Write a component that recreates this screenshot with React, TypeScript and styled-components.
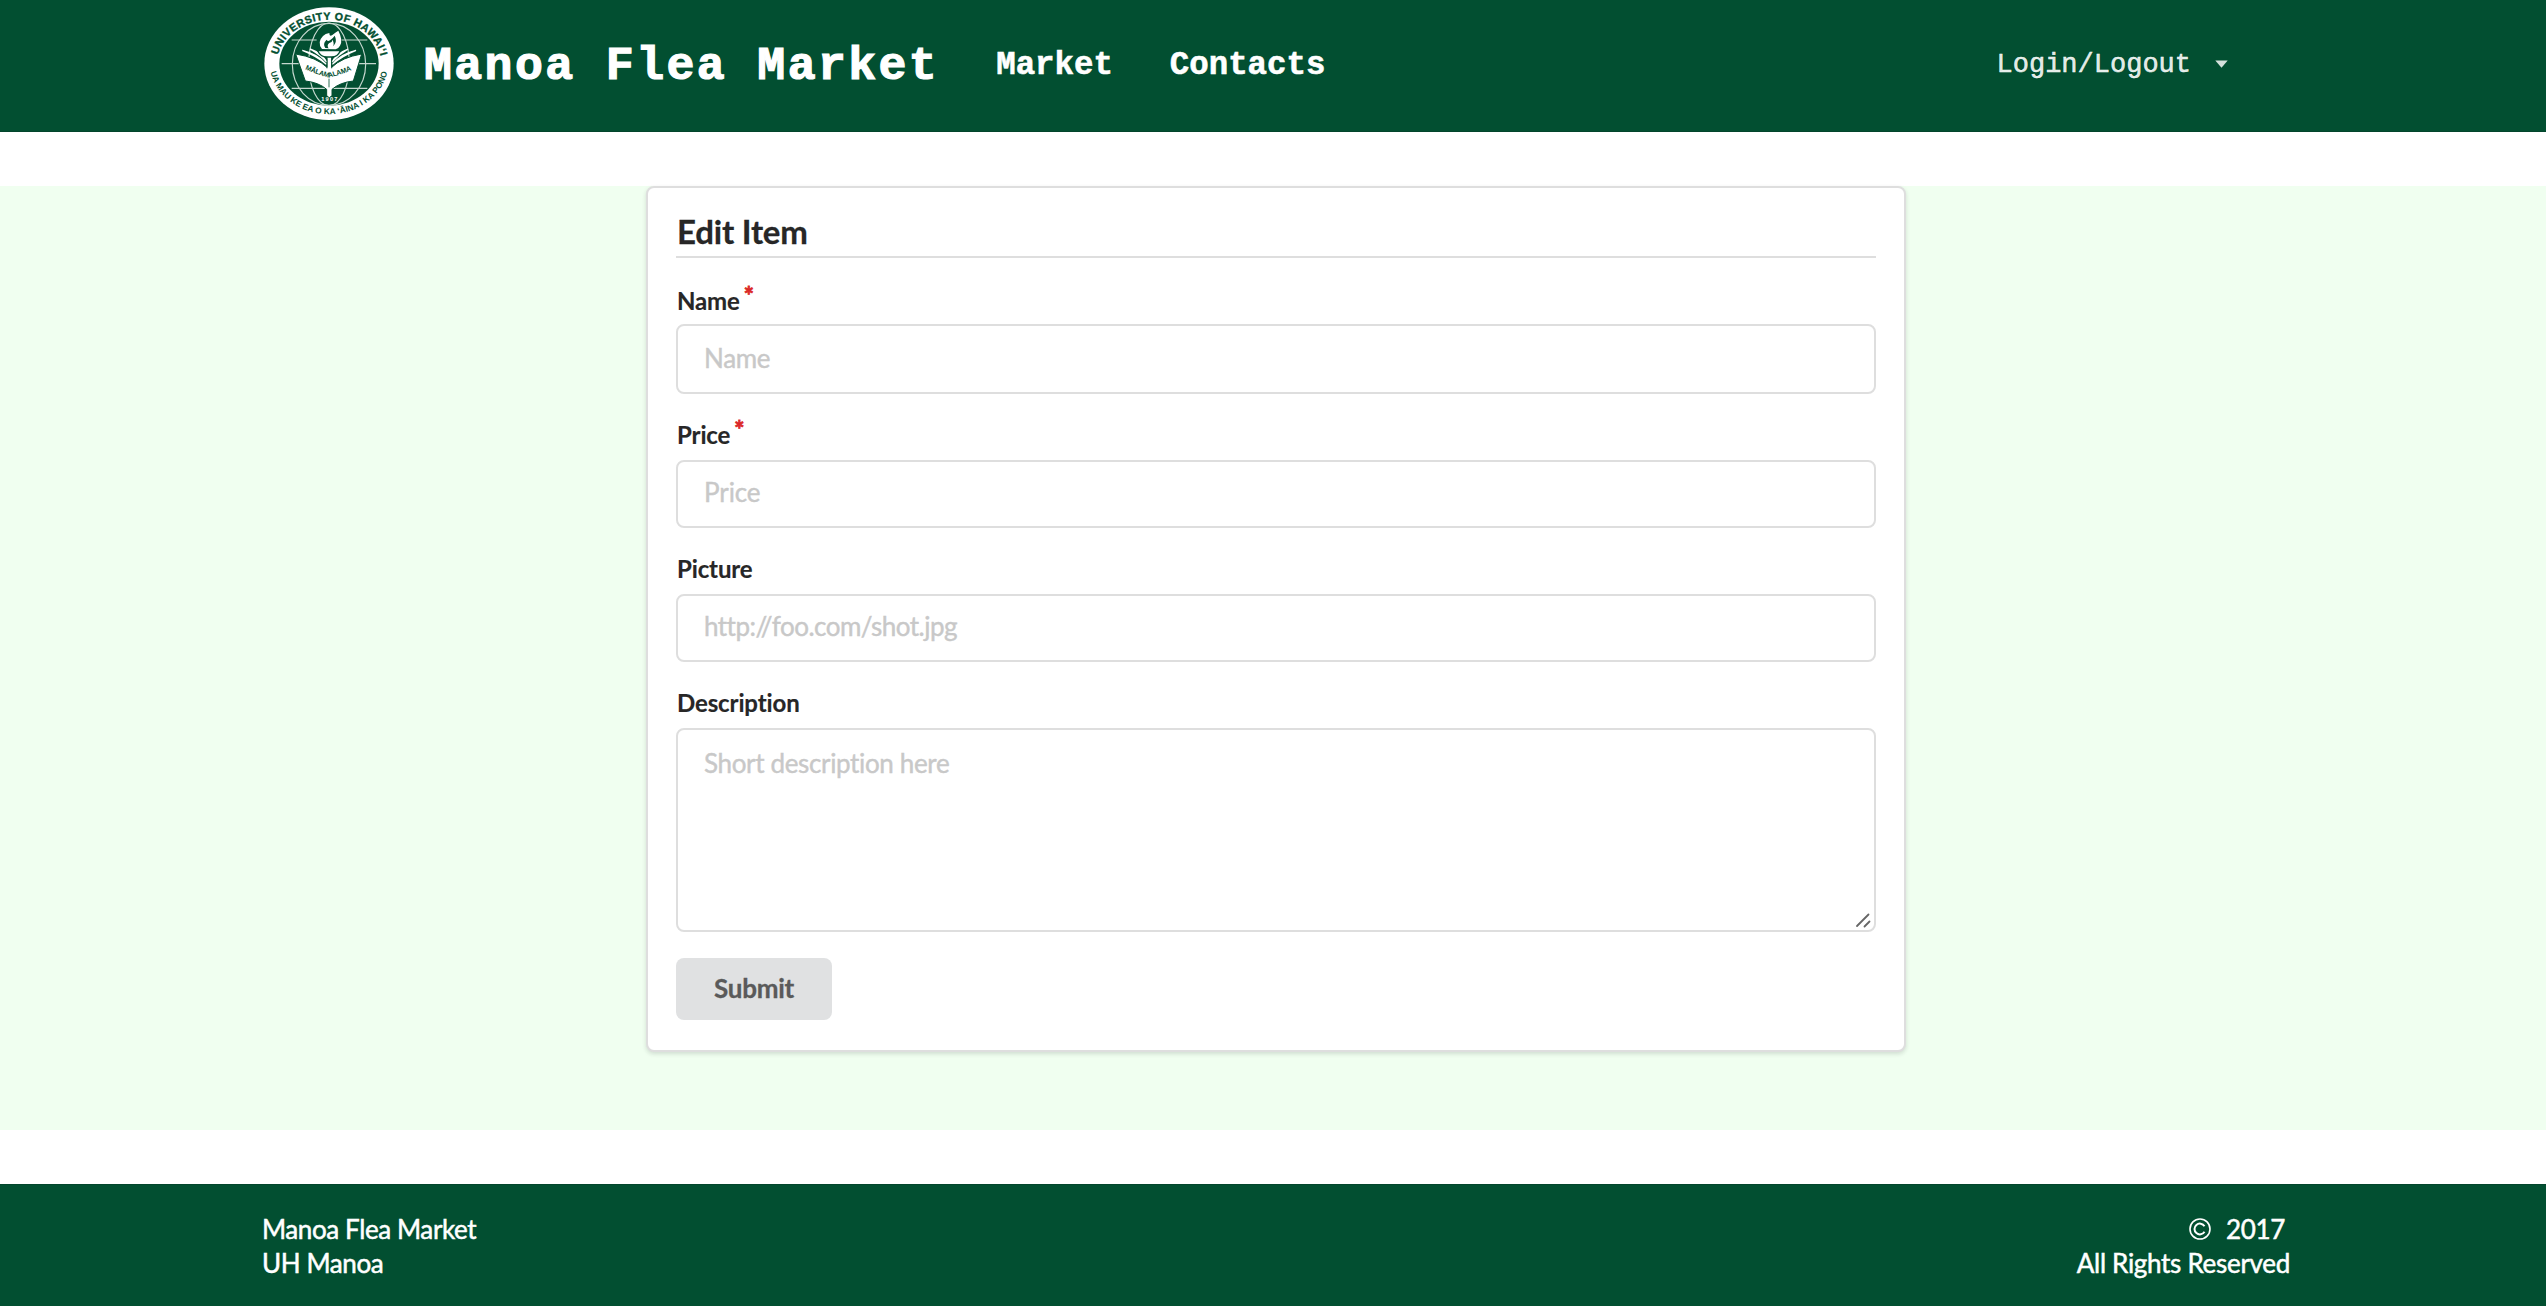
import React from "react";
import styled, { createGlobalStyle } from "styled-components";

const GlobalStyle = createGlobalStyle`
  * { box-sizing: border-box; }
  body { margin: 0; background: #fff; font-family: Lato, "Liberation Sans", sans-serif; font-size: 26px; letter-spacing: -.4px; color: rgba(0,0,0,.87); }
`;

const GREEN = "#024f31";
const LINE = "#dedede";
const MONO = '"Liberation Mono", "Courier New", monospace';

const Page = styled.div`
  height: 1306px;
  display: flex;
  flex-direction: column;
  overflow: hidden;
`;
const NavBar = styled.header`
  height: 132px;
  flex: none;
  background: ${GREEN};
  border-bottom: 1px solid #03452c;
  padding: 0 318px 0 264px;
  display: flex;
  align-items: center;
  color: #fff;
  font-family: ${MONO};
  letter-spacing: 0;
`;
const Logo = styled.svg`
  width: 130px;
  height: 114px;
  flex: none;
  margin-bottom: 3px;
`;
const Brand = styled.h1`
  margin: 3px 0 0 30px;
  font-size: 46.500px;
  line-height: 54px;
  letter-spacing: 2.400px;
  font-weight: 700;
  white-space: nowrap;
  -webkit-text-stroke: 1.200px #fff;
`;
const NavLink = styled.a`
  margin-left: 57px;
  font-size: 32.400px;
  line-height: 40px;
  font-weight: 700;
  -webkit-text-stroke: .6px #fff;
`;
const LoginMenu = styled.div`
  margin: 0 0 2px auto;
  display: flex;
  align-items: center;
  gap: 24px;
  font-size: 27px;
  line-height: 32px;
  color: rgba(255,255,255,.9);
  -webkit-text-stroke: .5px rgba(255,255,255,.9);
`;
const Caret = styled.svg`
  width: 13px;
  height: 8px;
  display: block;
  margin-bottom: 2px;
`;
const Main = styled.main`
  margin: 54px 0;
  height: 944px;
  flex: none;
  background: #f0fff0;
  display: flex;
  justify-content: center;
  align-items: flex-start;
  padding-left: 6px;
`;
const Card = styled.form`
  width: 1260px;
  height: 866px;
  background: #fff;
  border: 2px solid ${LINE};
  border-radius: 8px;
  box-shadow: 0 2px 4px rgba(34,36,38,.15);
  padding: 28px;
`;
const CardTitle = styled.h2`
  margin: 0;
  height: 42px;
  border-bottom: 2px solid ${LINE};
  padding-left: 1px;
  font-size: 33px;
  line-height: 30px;
  letter-spacing: -.2px;
  font-weight: 700;
  -webkit-text-stroke: .3px #222;
`;
const Field = styled.div`
  margin-top: 31px;
  display: flex;
  flex-direction: column;
`;
const Label = styled.label<{ $lh?: number }>`
  height: 35px;
  padding-left: 1px;
  font-size: 24px;
  line-height: ${(p) => p.$lh ?? 19}px;
  letter-spacing: -.12px;
  font-weight: 700;
  -webkit-text-stroke: .2px #222;
`;
const Star = styled.span`
  color: #db2828;
  margin-left: 4px;
  position: relative;
  top: -5px;
  -webkit-text-stroke: .8px #db2828;
`;
const Input = styled.input<{ $h: number; $lift: number; $track?: number }>`
  width: 100%;
  height: ${(p) => p.$h}px;
  border: 2px solid ${LINE};
  border-radius: 8px;
  padding: 0 26px ${(p) => p.$lift}px;
  font: 400 26px Lato, sans-serif;
  letter-spacing: ${(p) => p.$track ?? -0.3}px;
  outline: none;
  &::placeholder { color: #c8c8c8; opacity: 1; -webkit-text-stroke: .4px #c8c8c8; }
`;
const TextBox = styled.div`
  height: 204px;
  border: 2px solid ${LINE};
  border-radius: 8px;
  padding: 16px 3px 2px 26px;
  display: flex;
  justify-content: space-between;
  color: #c8c8c8;
  line-height: 35px;
  letter-spacing: -.35px;
  -webkit-text-stroke: .4px #c8c8c8;
`;
const Grip = styled.svg`
  width: 16px;
  height: 16px;
  align-self: flex-end;
`;
const Submit = styled.button`
  display: block;
  margin-top: 26px;
  width: 156px;
  height: 62px;
  border: 0;
  border-radius: 8px;
  background: #e0e1e2;
  color: #5a5a5a;
  font: 700 26px Lato, sans-serif;
  letter-spacing: -.25px;
  padding: 0 0 3px;
  -webkit-text-stroke: .3px #5a5a5a;
`;
const Footer = styled.footer`
  flex: 1;
  background: ${GREEN};
  border-top: 1px solid #03452c;
  color: #fff;
  padding: 27px 256px 0 262px;
  display: flex;
  justify-content: space-between;
  line-height: 34px;
  -webkit-text-stroke: .5px #fff;
`;
const FooterRight = styled.div`
  text-align: right;
  letter-spacing: -.3px;
`;
const Year = styled.div`
  display: flex;
  justify-content: flex-end;
  align-items: center;
  gap: 15px;
  padding-right: 5px;
`;
const CopyMark = styled.svg`
  width: 22px;
  height: 22px;
`;
const SealText = styled.text`
  font-family: "Liberation Sans", Arial, sans-serif;
  font-weight: 700;
  letter-spacing: 0;
`;

function Seal() {
  return (
    <Logo viewBox="42 21 390 342">
      <defs>
        <path id="sealTop" d="M84 165A157 134 0 0 1 391 165" />
        <path id="sealBottom" d="M62 216A178 155 0 0 0 412 216" />
        <path id="bookWord" d="M165 208Q200 224 237 233Q275 224 311 208" />
      </defs>
      <ellipse cx="237" cy="191" rx="194" ry="169" fill="#fff" />
      <ellipse cx="237" cy="191" rx="149" ry="126" fill={GREEN} />
      <g fill="none" stroke="#c5d7ce" strokeWidth="3.500">
        <ellipse cx="237" cy="193" rx="110" ry="123" />
        <ellipse cx="237" cy="193" rx="61" ry="124" />
        <path d="M125 120H200M275 120H352M95 191H150M325 191H378M125 265H352" />
      </g>
      <path d="M137 162Q200 172 231 202V164H245V202Q276 172 335 162L310 243Q270 247 246 268V286L238 294 230 286V268Q206 247 166 243Z" fill="#fff" stroke={GREEN} strokeWidth="3" />
      <path d="M157 151Q205 163 229 193Q202 169 157 151ZM180 147Q216 160 230 186Q210 164 180 147ZM318 151Q270 163 247 193Q274 169 318 151ZM294 147Q260 160 246 186Q266 164 294 147Z" fill="#fff" stroke="#fff" strokeWidth="4" />
      <path d="M203 152H271Q263 171 245 171H230Q212 171 203 152Z" fill="#fff" stroke={GREEN} strokeWidth="4" />
      <path d="M216 147Q200 127 219 108Q226 101 238 99Q238 112 247 105Q258 96 265 92Q280 121 270 137Q265 146 257 148Z" fill="#fff" />
      <path d="M226 144Q217 131 230 119Q233 126 240 121Q248 116 254 107Q260 120 256 129Q250 142 235 145Z" fill={GREEN} />
      <path d="M235 144Q230 135 238 129Q246 128 248 119Q256 139 243 145Z" fill="#fff" />
      <path d="M231 176V205M245 176V205M237 236V262" stroke={GREEN} strokeWidth="2.500" />
      <SealText fontSize="32" fill={GREEN} stroke={GREEN} strokeWidth="1"><textPath href="#sealTop" textLength="404">UNIVERSITY OF HAWAIʻI</textPath></SealText>
      <SealText fontSize="25" fill={GREEN}><textPath href="#sealBottom" textLength="466">UA MAU KE EA O KA ʻĀINA I KA PONO</textPath></SealText>
      <SealText fontSize="21" fill={GREEN}><textPath href="#bookWord" textLength="148">MĀLAMALAMA</textPath></SealText>
      <SealText x="214" y="303" fontSize="17" textLength="48" fill="#fff">1907</SealText>
    </Logo>
  );
}

export default function App() {
  return (
    <Page>
      <GlobalStyle />
      <NavBar>
        <Seal />
        <Brand>Manoa Flea Market</Brand>
        <NavLink>Market</NavLink>
        <NavLink>Contacts</NavLink>
        <LoginMenu>
          <span>Login/Logout</span>
          <Caret viewBox="0 0 13 8"><path d="M.3.500h12.400L6.500 7.800z" fill="#d5e1dc" /></Caret>
        </LoginMenu>
      </NavBar>
      <Main>
        <Card>
          <CardTitle>Edit Item</CardTitle>
          <Field>
            <Label $lh={23}>Name<Star>*</Star></Label>
            <Input $h={70} $lift={2} placeholder="Name" />
          </Field>
          <Field>
            <Label>Price<Star>*</Star></Label>
            <Input $h={68} $lift={4} $track={-0.1} placeholder="Price" />
          </Field>
          <Field>
            <Label>Picture</Label>
            <Input $h={68} $lift={4} $track={-0.52} placeholder="http://foo.com/shot.jpg" />
          </Field>
          <Field>
            <Label>Description</Label>
            <TextBox>
              <span>Short description here</span>
              <Grip viewBox="0 0 16 16"><path d="M2 14 13.500 2.500M9.500 14.500 14.500 9.500" stroke="#666" strokeWidth="1.800" strokeLinecap="round" /></Grip>
            </TextBox>
          </Field>
          <Submit type="button">Submit</Submit>
        </Card>
      </Main>
      <Footer>
        <div>Manoa Flea Market<br />UH Manoa</div>
        <FooterRight>
          <Year>
            <CopyMark viewBox="0 0 22 22" fill="none" stroke="#fff" strokeWidth="1.600">
              <circle cx="11" cy="11" r="10" />
              <path d="M15.500 8.200A5.400 5.400 0 1 0 15.500 13.800" strokeWidth="2" />
            </CopyMark>
            <span>2017</span>
          </Year>
          All Rights Reserved
        </FooterRight>
      </Footer>
    </Page>
  );
}
